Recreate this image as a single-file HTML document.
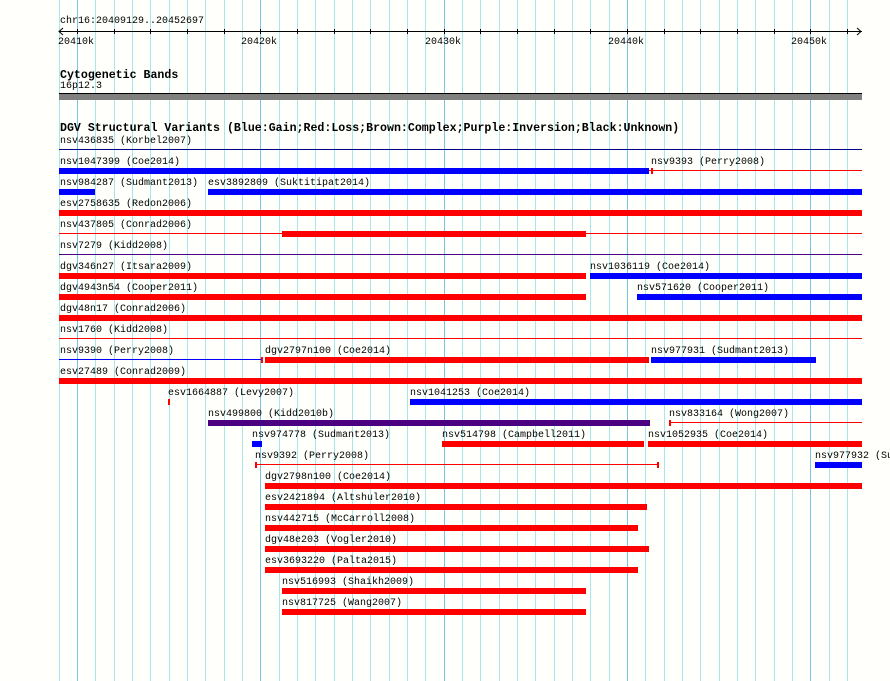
<!DOCTYPE html>
<html><head><meta charset="utf-8"><style>
body{margin:0;width:890px;height:681px;background:#fffffc;position:relative;overflow:hidden;font-family:"Liberation Mono","DejaVu Sans Mono",monospace;}
div{position:absolute}
.g{top:0;height:681px;width:1px;background:#a8e6ee}
.G{top:0;height:681px;width:1px;background:#78c4e6}
.l{font-size:10px;line-height:10px;white-space:nowrap;color:#000;margin-top:2px}
.h{font-size:11.6px;line-height:12px;font-weight:bold;white-space:nowrap;margin-top:2px}
.b{height:6px}
.t{height:1px}
.k{width:1px;height:5px;background:#000;top:29px}
.R{background:#ff0000}.B{background:#0000ff}.P{background:#4b0082}.N{background:#00008b}
.tl{font-size:10px;line-height:10px;top:38px;white-space:nowrap}
</style></head><body>
<div class="g" style="left:59px"></div><div class="G" style="left:77px"></div><div class="g" style="left:95px"></div><div class="g" style="left:114px"></div><div class="g" style="left:132px"></div><div class="g" style="left:150px"></div><div class="g" style="left:169px"></div><div class="g" style="left:187px"></div><div class="g" style="left:205px"></div><div class="g" style="left:224px"></div><div class="g" style="left:242px"></div><div class="G" style="left:260px"></div><div class="g" style="left:279px"></div><div class="g" style="left:297px"></div><div class="g" style="left:315px"></div><div class="g" style="left:334px"></div><div class="g" style="left:352px"></div><div class="g" style="left:370px"></div><div class="g" style="left:389px"></div><div class="g" style="left:407px"></div><div class="g" style="left:425px"></div><div class="G" style="left:444px"></div><div class="g" style="left:462px"></div><div class="g" style="left:480px"></div><div class="g" style="left:499px"></div><div class="g" style="left:517px"></div><div class="g" style="left:535px"></div><div class="g" style="left:554px"></div><div class="g" style="left:572px"></div><div class="g" style="left:590px"></div><div class="g" style="left:609px"></div><div class="G" style="left:627px"></div><div class="g" style="left:645px"></div><div class="g" style="left:664px"></div><div class="g" style="left:682px"></div><div class="g" style="left:700px"></div><div class="g" style="left:719px"></div><div class="g" style="left:737px"></div><div class="g" style="left:755px"></div><div class="g" style="left:774px"></div><div class="g" style="left:792px"></div><div class="G" style="left:810px"></div><div class="g" style="left:829px"></div><div class="g" style="left:847px"></div>

<div class="l" style="left:60px;top:15px">chr16:20409129..20452697</div>
<div style="left:59px;top:31px;width:803px;height:1px;background:#000"></div>
<svg style="position:absolute;left:58px;top:27px" width="6" height="9"><path d="M5 1 L1 4.5 L5 8" stroke="#000" fill="none"/></svg>
<svg style="position:absolute;left:856px;top:27px" width="6" height="9"><path d="M1 1 L5 4.5 L1 8" stroke="#000" fill="none"/></svg>
<div class="k" style="left:77px"></div><div class="k" style="left:114px"></div><div class="k" style="left:150px"></div><div class="k" style="left:187px"></div><div class="k" style="left:224px"></div><div class="k" style="left:260px"></div><div class="k" style="left:297px"></div><div class="k" style="left:334px"></div><div class="k" style="left:370px"></div><div class="k" style="left:407px"></div><div class="k" style="left:444px"></div><div class="k" style="left:480px"></div><div class="k" style="left:517px"></div><div class="k" style="left:554px"></div><div class="k" style="left:590px"></div><div class="k" style="left:627px"></div><div class="k" style="left:664px"></div><div class="k" style="left:700px"></div><div class="k" style="left:737px"></div><div class="k" style="left:774px"></div><div class="k" style="left:810px"></div><div class="k" style="left:847px"></div>
<div class="tl" style="left:58px">20410k</div><div class="tl" style="left:241px">20420k</div><div class="tl" style="left:425px">20430k</div><div class="tl" style="left:608px">20440k</div><div class="tl" style="left:791px">20450k</div>

<div class="h" style="left:60px;top:68px">Cytogenetic Bands</div>
<div class="l" style="left:60px;top:80px">16p12.3</div>
<div style="left:59px;top:93px;width:803px;height:1px;background:#000"></div>
<div style="left:59px;top:94px;width:803px;height:6px;background:#808080"></div>

<div class="h" style="left:60px;top:121px">DGV Structural Variants (Blue:Gain;Red:Loss;Brown:Complex;Purple:Inversion;Black:Unknown)</div>

<div class="l" style="left:60px;top:135px">nsv436835 (Korbel2007)</div>
<div class="t N" style="left:59px;top:149px;width:803px"></div>
<div class="l" style="left:60px;top:156px">nsv1047399 (Coe2014)</div>
<div class="b B" style="left:59px;top:168px;width:590px"></div>
<div class="l" style="left:651px;top:156px">nsv9393 (Perry2008)</div>
<div class="t R" style="left:649px;top:170px;width:213px"></div>
<div class="R" style="left:651px;top:168px;width:2px;height:6px"></div>
<div class="l" style="left:60px;top:177px">nsv984287 (Sudmant2013)</div>
<div class="b B" style="left:59px;top:189px;width:36px"></div>
<div class="l" style="left:208px;top:177px">esv3892809 (Suktitipat2014)</div>
<div class="b B" style="left:208px;top:189px;width:654px"></div>
<div class="l" style="left:60px;top:198px">esv2758635 (Redon2006)</div>
<div class="b R" style="left:59px;top:210px;width:803px"></div>
<div class="l" style="left:60px;top:219px">nsv437805 (Conrad2006)</div>
<div class="t R" style="left:59px;top:233px;width:803px"></div>
<div class="b R" style="left:282px;top:231px;width:304px"></div>
<div class="l" style="left:60px;top:240px">nsv7279 (Kidd2008)</div>
<div class="t P" style="left:59px;top:254px;width:803px"></div>
<div class="l" style="left:60px;top:261px">dgv346n27 (Itsara2009)</div>
<div class="b R" style="left:59px;top:273px;width:527px"></div>
<div class="l" style="left:590px;top:261px">nsv1036119 (Coe2014)</div>
<div class="b B" style="left:590px;top:273px;width:272px"></div>
<div class="l" style="left:60px;top:282px">dgv4943n54 (Cooper2011)</div>
<div class="b R" style="left:59px;top:294px;width:527px"></div>
<div class="l" style="left:637px;top:282px">nsv571620 (Cooper2011)</div>
<div class="b B" style="left:637px;top:294px;width:225px"></div>
<div class="l" style="left:60px;top:303px">dgv48n17 (Conrad2006)</div>
<div class="b R" style="left:59px;top:315px;width:803px"></div>
<div class="l" style="left:60px;top:324px">nsv1760 (Kidd2008)</div>
<div class="t R" style="left:59px;top:338px;width:803px"></div>
<div class="l" style="left:60px;top:345px">nsv9390 (Perry2008)</div>
<div class="t B" style="left:59px;top:359px;width:203px"></div>
<div class="R" style="left:261px;top:357px;width:2px;height:6px"></div>
<div class="l" style="left:265px;top:345px">dgv2797n100 (Coe2014)</div>
<div class="b R" style="left:265px;top:357px;width:384px"></div>
<div class="l" style="left:651px;top:345px">nsv977931 (Sudmant2013)</div>
<div class="b B" style="left:651px;top:357px;width:165px"></div>
<div class="l" style="left:60px;top:366px">esv27489 (Conrad2009)</div>
<div class="b R" style="left:59px;top:378px;width:803px"></div>
<div class="l" style="left:168px;top:387px">esv1664887 (Levy2007)</div>
<div class="b R" style="left:168px;top:399px;width:2px"></div>
<div class="l" style="left:410px;top:387px">nsv1041253 (Coe2014)</div>
<div class="b B" style="left:410px;top:399px;width:452px"></div>
<div class="l" style="left:208px;top:408px">nsv499800 (Kidd2010b)</div>
<div class="b P" style="left:208px;top:420px;width:442px"></div>
<div class="l" style="left:669px;top:408px">nsv833164 (Wong2007)</div>
<div class="t R" style="left:669px;top:422px;width:193px"></div>
<div class="R" style="left:669px;top:420px;width:2px;height:6px"></div>
<div class="l" style="left:252px;top:429px">nsv974778 (Sudmant2013)</div>
<div class="b B" style="left:252px;top:441px;width:10px"></div>
<div class="l" style="left:442px;top:429px">nsv514798 (Campbell2011)</div>
<div class="b R" style="left:442px;top:441px;width:202px"></div>
<div class="l" style="left:648px;top:429px">nsv1052935 (Coe2014)</div>
<div class="b R" style="left:648px;top:441px;width:214px"></div>
<div class="l" style="left:255px;top:450px">nsv9392 (Perry2008)</div>
<div class="t R" style="left:255px;top:464px;width:403px"></div>
<div class="R" style="left:255px;top:462px;width:2px;height:6px"></div>
<div class="R" style="left:657px;top:462px;width:2px;height:6px"></div>
<div class="l" style="left:815px;top:450px">nsv977932 (Su</div>
<div class="b B" style="left:815px;top:462px;width:47px"></div>
<div class="l" style="left:265px;top:471px">dgv2798n100 (Coe2014)</div>
<div class="b R" style="left:265px;top:483px;width:597px"></div>
<div class="l" style="left:265px;top:492px">esv2421894 (Altshuler2010)</div>
<div class="b R" style="left:265px;top:504px;width:382px"></div>
<div class="l" style="left:265px;top:513px">nsv442715 (McCarroll2008)</div>
<div class="b R" style="left:265px;top:525px;width:373px"></div>
<div class="l" style="left:265px;top:534px">dgv48e203 (Vogler2010)</div>
<div class="b R" style="left:265px;top:546px;width:384px"></div>
<div class="l" style="left:265px;top:555px">esv3693220 (Palta2015)</div>
<div class="b R" style="left:265px;top:567px;width:373px"></div>
<div class="l" style="left:282px;top:576px">nsv516993 (Shaikh2009)</div>
<div class="b R" style="left:282px;top:588px;width:304px"></div>
<div class="l" style="left:282px;top:597px">nsv817725 (Wang2007)</div>
<div class="b R" style="left:282px;top:609px;width:304px"></div>
</body></html>
